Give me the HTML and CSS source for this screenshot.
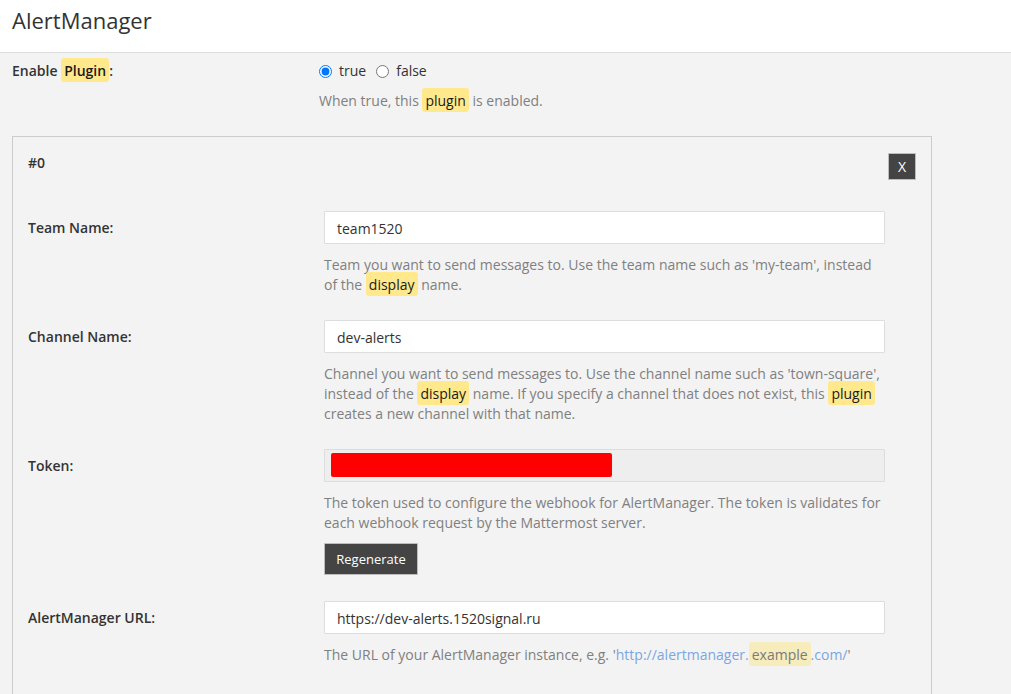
FILE: index.html
```html
<!DOCTYPE html>
<html>
<head>
<meta charset="utf-8">
<link rel="stylesheet" href="styles.css">
</head>
<body>
<div class="header"><h1 class="title">AlertManager</h1></div>
<div class="content">
  <div class="top-row">
    <div class="label">Enable <mark class="hl">Plugin</mark>:</div>
    <div class="control">
      <div class="radios">
        <label class="radio"><input type="radio" name="enable" checked><span>true</span></label>
        <label class="radio"><input type="radio" name="enable"><span>false</span></label>
      </div>
      <div class="help">When true, this <mark class="hl">plugin</mark> is enabled.</div>
    </div>
  </div>

  <div class="card">
    <div class="card-head">
      <div class="card-title">#0</div>
      <button class="btn btn-x">X</button>
    </div>

    <div class="setting">
      <div class="label setting-label">Team Name:</div>
      <div class="control">
        <input class="input" type="text" value="team1520">
        <div class="help">Team you want to send messages to. Use the team name such as 'my-team', instead of the <mark class="hl">display</mark> name.</div>
      </div>
    </div>

    <div class="setting">
      <div class="label setting-label">Channel Name:</div>
      <div class="control">
        <input class="input" type="text" value="dev-alerts">
        <div class="help">Channel you want to send messages to. Use the channel name such as 'town-square', instead of the <mark class="hl">display</mark> name. If you specify a channel that does not exist, this <mark class="hl">plugin</mark> creates a new channel with that name.</div>
      </div>
    </div>

    <div class="setting setting-token">
      <div class="label setting-label">Token:</div>
      <div class="control">
        <div class="input input-disabled"><span class="redact"></span></div>
        <div class="help">The token used to configure the webhook for AlertManager. The token is validates for each webhook request by the Mattermost server.</div>
        <button class="btn btn-regen">Regenerate</button>
      </div>
    </div>

    <div class="setting">
      <div class="label setting-label">AlertManager URL:</div>
      <div class="control">
        <input class="input" type="text" value="https://dev-alerts.1520signal.ru">
        <div class="help">The URL of your AlertManager instance, e.g. '<a class="link" href="#">http://alertmanager.<mark class="hl hl-soft">example</mark>.com/</a>'</div>
      </div>
    </div>
  </div>
</div>
</body>
</html>
```

FILE: styles.css
```css
* { box-sizing: border-box; }

html, body {
  margin: 0;
  padding: 0;
}

body {
  background: #f3f3f3;
  font-family: "Open Sans", "Liberation Sans", sans-serif;
  font-size: 14px;
  line-height: 20px;
  color: #333333;
  overflow: hidden;
}

.header {
  background: #ffffff;
  height: 53px;
  border-bottom: 1px solid #dddddd;
  padding: 6px 12px 0;
}

.title {
  margin: 0;
  font-size: 22px;
  line-height: 28px;
  font-weight: 400;
  color: #333333;
}

.content {
  padding: 8px 12px 0;
  width: 933px;
}

.top-row {
  display: grid;
  grid-template-columns: 307px 1fr;
}

.label {
  font-weight: 600;
  color: #333333;
}

.hl {
  background: #ffe98c;
  color: #1a1a1a;
  padding: 3px 3px 2px;
  border-radius: 3px;
}

.hl-soft {
  background: #f6ecbc;
  color: #7a7a7a;
}

.radios {
  display: flex;
  align-items: center;
  gap: 10px;
}

.radio {
  display: flex;
  align-items: center;
  gap: 7px;
  color: #333333;
}

.radio input {
  margin: 0;
  width: 13px;
  height: 13px;
}

.help {
  color: #808080;
  margin-top: 10px;
}

.card {
  margin-top: 25px;
  width: 920px;
  border: 1px solid #cccccc;
  padding: 15px 15px 40px;
}

.card-head {
  display: flex;
  justify-content: space-between;
  align-items: flex-start;
  height: 28px;
  margin-bottom: 31px;
}

.card-title {
  font-weight: 600;
  color: #333333;
  padding-top: 1px;
}

.btn {
  font-family: "Open Sans", "Liberation Sans", sans-serif;
  background: #444444;
  color: #ffffff;
  border: 1px solid #bdbdbd;
  border-radius: 1px;
  cursor: pointer;
}

.btn-x {
  margin-top: 1px;
  width: 28px;
  height: 27px;
  padding: 0;
  font-size: 14px;
}

.setting {
  display: grid;
  grid-template-columns: 296px 561px;
  margin-bottom: 25px;
}

.setting-token {
  margin-bottom: 26px;
}

.setting-label {
  padding-top: 7px;
}

.input {
  display: block;
  width: 561px;
  height: 33px;
  border: 1px solid #dddddd;
  background: #ffffff;
  padding: 1px 12px 0;
  font-family: "Open Sans", "Liberation Sans", sans-serif;
  font-size: 14px;
  color: #333333;
  outline: none;
  border-radius: 1px;
}

.input-disabled {
  background: #eeeeee;
  padding: 3px 6px;
}

.redact {
  display: block;
  width: 281px;
  height: 24px;
  background: #ff0000;
  border-radius: 2px;
}

.setting .help {
  margin-top: 11px;
}

.btn-regen {
  margin-top: 10px;
  height: 32px;
  width: 94px;
  padding: 0;
  font-size: 13px;
}

.link {
  color: #7ba6e3;
  text-decoration: none;
}
```
